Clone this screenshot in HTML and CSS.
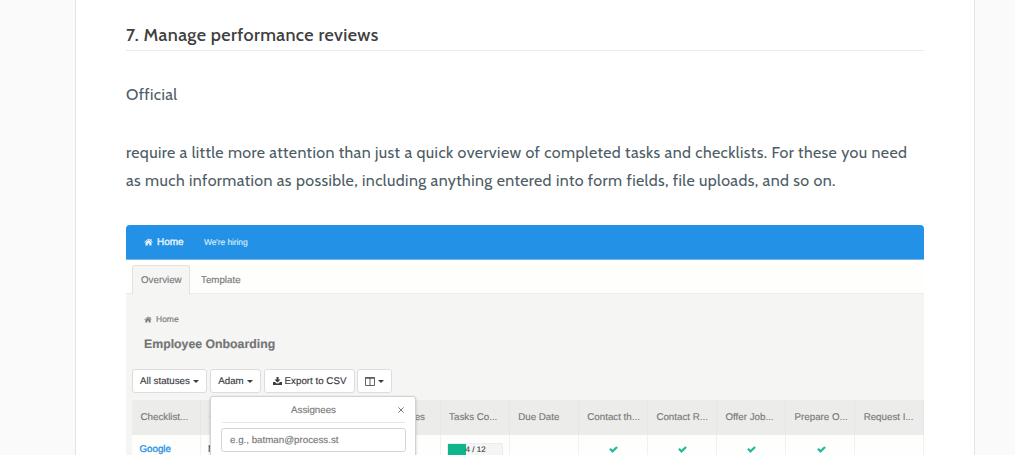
FILE: index.html
```html
<!DOCTYPE html>
<html lang="en">
<head>
    <meta charset="UTF-8">
    <meta name="viewport" content="width=device-width, initial-scale=1.0">
    <title>Manage performance reviews</title>
    <link rel="stylesheet" href="styles.css">
</head>
<body>
    <svg class="symbols" width="0" height="0">
        <symbol id="home" viewBox="0 0 18 16">
            <path d="M9 3.8 3 9v6h4.4v-4h3.2v4H15V9zM9 1 .6 8l1 1.2L9 3l7.4 6.2 1-1.2L15 6V2h-2.3v2.1z"/>
        </symbol>
        <symbol id="check" viewBox="0 0 18 14">
            <path d="M3.2 4 7 7.6 14.6.4l3.1 3.1L7 13.8.3 7.2z"/>
        </symbol>
    </svg>

    <main class="article">
        <h2>7. Manage performance reviews</h2>
        <p class="official">Official</p>
        <p class="line1">require a little more attention than just a quick overview of completed tasks and checklists. For these you need</p>
        <p class="line2">as much information as possible, including anything entered into form fields, file uploads, and so on.</p>

        <div class="app">
            <div class="navbar">
                <svg class="nav-home"><use href="#home"/></svg>
                <span class="nav-title">Home</span>
                <span class="nav-sub">We're hiring</span>
            </div>
            <div class="tabs">
                <div class="tab active">Overview</div>
                <div class="tab">Template</div>
            </div>
            <div class="content">
                <div class="breadcrumb"><svg><use href="#home"/></svg><span>Home</span></div>
                <h3>Employee Onboarding</h3>

                <div class="toolbar">
                    <div class="btn statuses"><span>All statuses</span><i class="caret"></i></div>
                    <div class="btn adam">
                        <span>Adam</span><i class="caret"></i>
                        <!-- assignee dropdown -->
                        <div class="popup">
                            <div class="popup-head">
                                <span>Assignees</span>
                                <svg viewBox="0 0 8 8"><path d="M1.4 1.4 6.6 6.6M6.6 1.4 1.4 6.6"/></svg>
                            </div>
                            <div class="field">e.g., batman@process.st</div>
                        </div>
                    </div>
                    <div class="btn export">
                        <svg viewBox="0 0 18 16"><path d="M7 0h4v5h4L9 11 3 5h4zM0 10h4l3.2 3h3.6L14 10h4v6H0z"/></svg>
                        <span>Export to CSV</span>
                    </div>
                    <div class="btn columns">
                        <svg viewBox="0 0 10 9"><path d="M.5.5h9v8h-9zM.5 1.3h9M5 1v7.5"/></svg>
                        <i class="caret"></i>
                    </div>
                </div>

                <div class="table">
                    <div class="row head">
                        <div>Checklist...</div>
                        <div>Created</div>
                        <div></div>
                        <div>Assignees</div>
                        <div>Tasks Co...</div>
                        <div>Due Date</div>
                        <div>Contact th...</div>
                        <div>Contact R...</div>
                        <div>Offer Job...</div>
                        <div>Prepare O...</div>
                        <div>Request I...</div>
                    </div>
                    <div class="row">
                        <div class="name">Google</div>
                        <div class="created">Nov</div>
                        <div></div>
                        <div></div>
                        <div class="tasks"><div class="progress"><i class="done"></i><span>4 / 12</span></div></div>
                        <div></div>
                        <div class="tick"><svg><use href="#check"/></svg></div>
                        <div class="tick"><svg><use href="#check"/></svg></div>
                        <div class="tick"><svg><use href="#check"/></svg></div>
                        <div class="tick"><svg><use href="#check"/></svg></div>
                        <div></div>
                    </div>
                </div>
            </div>
        </div>
    </main>
</body>
</html>
```
FILE: styles.css
```css
* {
    box-sizing: border-box;
}

body {
    margin: 0;
    height: 455px;
    overflow: hidden;
    background: #fafafa;
    font-family: Cabin, Lato, sans-serif;
    color: #4d5c65;
}

.symbols {
    position: absolute;
}

.article {
    width: 900px;
    height: 455px;
    margin: 0 auto 0 75px;
    padding: 20px 50px 0;
    background: #fff;
    border: 1px solid #e4e4e4;
    border-width: 0 1px;
    overflow: hidden;
}

h2 {
    margin: 0;
    height: 31px;
    border-bottom: 1px solid #ebebeb;
    color: #404040;
    font-size: 18px;
    font-weight: 500;
    letter-spacing: 0.4px;
    line-height: 30px;
    white-space: nowrap;
}

p {
    margin: 0;
    font-size: 16px;
    letter-spacing: 0.4px;
    line-height: 28px;
    white-space: nowrap;
}

.official {
    margin: 30px 0;
}

.line2 {
    margin-bottom: 30px;
}

.app {
    height: 300px;
    overflow: hidden;
    border-radius: 4px 4px 0 0;
    background: #f5f5f4;
    font-family: "Liberation Sans", Arial, sans-serif;
    font-size: 9.75px;
    color: #7a7a7a;
    -webkit-text-stroke: 0.15px;
    text-rendering: geometricPrecision;
}

.app svg {
    flex: none;
    fill: currentColor;
}

.navbar {
    display: flex;
    align-items: center;
    height: 35px;
    padding-left: 18px;
    background: #2391e6;
    border-bottom: 1px solid #79b9ea;
    color: #e8f5ff;
}

.nav-home {
    width: 9px;
    height: 8px;
    margin-right: 4px;
}

.nav-title {
    width: 47px;
    font-size: 10px;
    -webkit-text-stroke: 0.35px;
}

.nav-sub {
    color: #d5ebfc;
    font-size: 8.5px;
    letter-spacing: -0.12px;
}

.tabs {
    display: flex;
    align-items: flex-end;
    height: 34px;
    padding-left: 6px;
    background: #fefefc;
    box-shadow: inset 0 -1px #ececec;
}

.tab {
    height: 29px;
    padding: 0 11px;
    line-height: 32px;
}

.tab.active {
    width: 58px;
    padding: 0 8px;
    background: #f5f5f4;
    border: 1px solid #e2e2e2;
    border-bottom: 0;
    border-radius: 3px 3px 0 0;
    line-height: 30px;
}

.content {
    padding: 18px 0 0 6px;
}

.breadcrumb {
    display: flex;
    align-items: center;
    height: 14px;
    padding-left: 12px;
    font-size: 8.5px;
}

.breadcrumb svg {
    width: 8px;
    height: 7px;
    margin-right: 4px;
}

h3 {
    margin: 10px 0 17px 12px;
    font-size: 12.3px;
    line-height: 16px;
    color: #747474;
}

.toolbar {
    display: flex;
    gap: 3px;
    height: 24px;
}

.btn {
    position: relative;
    display: flex;
    align-items: center;
    justify-content: center;
    gap: 3px;
    border: 1px solid #ddd;
    border-radius: 3px;
    background: #fff;
    color: #3c3c3f;
    white-space: nowrap;
}

.statuses {
    width: 75px;
}

.adam {
    width: 51px;
}

.export {
    width: 91px;
}

.export svg {
    width: 9px;
    height: 8px;
}

.columns {
    width: 35px;
    margin-left: -1px;
}

.columns svg {
    width: 10px;
    height: 9px;
    fill: none;
    stroke: currentColor;
    stroke-width: 0.8;
}

.caret {
    border: 3px solid transparent;
    border-top-color: currentColor;
    border-bottom: 0;
}

.popup {
    position: absolute;
    left: -1px;
    top: 26px;
    z-index: 1;
    width: 206px;
    height: 100px;
    padding: 0 10px 0 11px;
    background: #fff;
    border: 1px solid #d2d2d2;
    border-radius: 3px;
    box-shadow: 0 1px 3px rgba(0, 0, 0, 0.2);
    color: #7a7a7a;
}

.popup-head {
    display: flex;
    align-items: center;
    justify-content: center;
    height: 26px;
    padding-top: 1px;
    border-bottom: 1px solid #e8e8e8;
}

.popup-head svg {
    position: absolute;
    right: 10px;
    width: 8px;
    height: 8px;
    stroke: currentColor;
}

.field {
    height: 24px;
    margin: 5px -1px 0;
    padding-left: 8px;
    border: 1px solid #d5d5d5;
    border-radius: 3px;
    line-height: 23px;
}

.table {
    margin-top: 7px;
}

.row {
    display: grid;
    grid-template-columns: 69px 101px 69.5px repeat(8, 69.1px);
    height: 35px;
    background: #fefefd;
}

.row > div {
    padding-left: 8.5px;
    border-right: 1px solid #f1f1f1;
    line-height: 30px;
    white-space: nowrap;
    overflow: hidden;
}

.row.head {
    background: #ececeb;
}

.row.head > div {
    border-color: #e7e7e7;
    line-height: 36px;
}

.row > .name {
    padding-left: 7.5px;
    color: #2391e6;
    -webkit-text-stroke: 0.3px;
}

.row > .created {
    padding-left: 7px;
    color: #444;
}

.row > .tasks {
    padding: 8px 0 0 6px;
}

.progress {
    display: flex;
    width: 56px;
    height: 13px;
    background: #f5f5f5;
    border: 1px solid #ececec;
    border-radius: 2px;
    color: #444;
    font-size: 8px;
    line-height: 12px;
}

.done {
    width: 18px;
    background: #10b68b;
}

.row > .tick {
    padding: 11px 0 0 30.5px;
    line-height: 0;
    color: #24b99a;
}

.tick svg {
    width: 9px;
    height: 7px;
}
```
